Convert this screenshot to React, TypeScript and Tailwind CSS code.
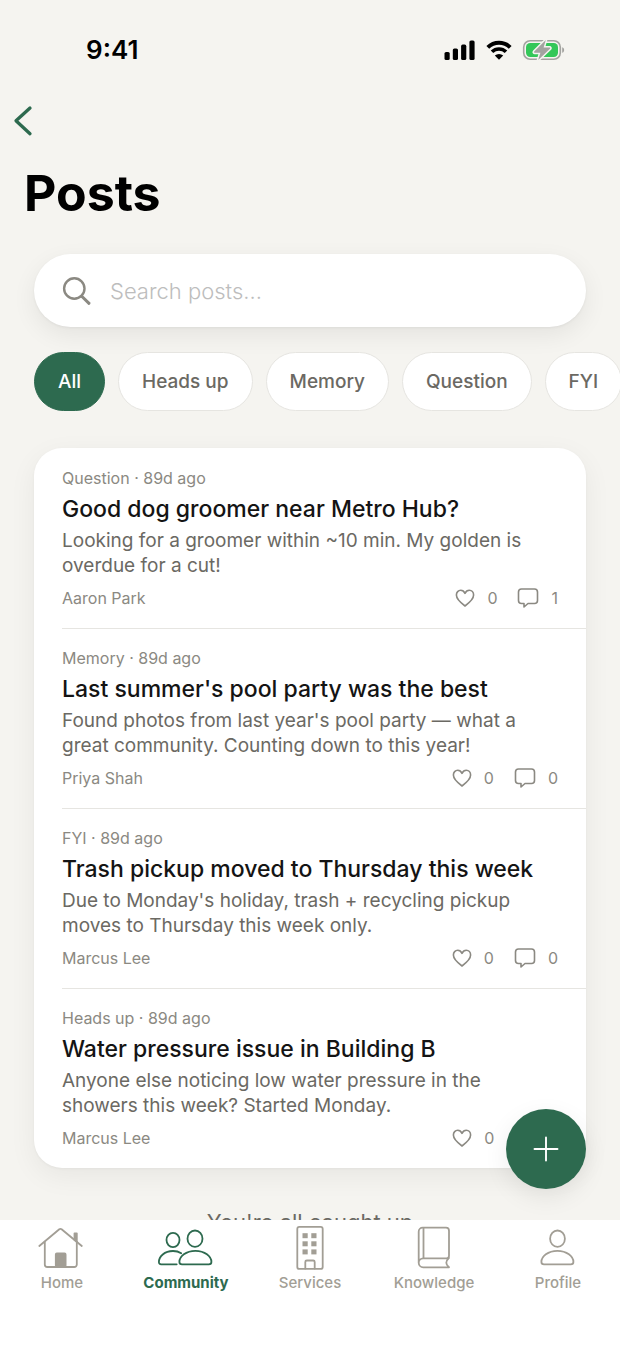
import { useState, type ReactNode } from "react";
import clsx from "clsx";

interface Post {
  id: number;
  category: string;
  age: string;
  title: string;
  body: string;
  author: string;
  likes: number;
  comments: number;
}

const categories = ["All", "Heads up", "Memory", "Question", "FYI"];

const posts: Post[] = [
  {
    id: 1,
    category: "Question",
    age: "89d ago",
    title: "Good dog groomer near Metro Hub?",
    body: "Looking for a groomer within ~10 min. My golden is overdue for a cut!",
    author: "Aaron Park",
    likes: 0,
    comments: 1,
  },
  {
    id: 2,
    category: "Memory",
    age: "89d ago",
    title: "Last summer's pool party was the best",
    body: "Found photos from last year's pool party — what a great community. Counting down to this year!",
    author: "Priya Shah",
    likes: 0,
    comments: 0,
  },
  {
    id: 3,
    category: "FYI",
    age: "89d ago",
    title: "Trash pickup moved to Thursday this week",
    body: "Due to Monday's holiday, trash + recycling pickup moves to Thursday this week only.",
    author: "Marcus Lee",
    likes: 0,
    comments: 0,
  },
  {
    id: 4,
    category: "Heads up",
    age: "89d ago",
    title: "Water pressure issue in Building B",
    body: "Anyone else noticing low water pressure in the showers this week? Started Monday.",
    author: "Marcus Lee",
    likes: 0,
    comments: 2,
  },
];

function StatusBar() {
  return (
    <div className="flex h-[100px] items-center justify-between pr-[54px] pl-[86px]">
      <span className="text-[26px] leading-8 font-semibold text-black">9:41</span>
      <div className="flex items-center gap-[9px]">
        <svg width="32" height="20" viewBox="0 0 32 20" fill="#000">
          <rect x="0.5" y="12" width="5.2" height="8" rx="1.6" />
          <rect x="8.8" y="8.4" width="5.2" height="11.6" rx="1.6" />
          <rect x="17.1" y="4.6" width="5.2" height="15.4" rx="1.6" />
          <rect x="25.4" y="0.5" width="5.2" height="19.5" rx="1.6" />
        </svg>
        <svg width="28" height="20" viewBox="0 0 28 20">
          <path d="M2.8 7.400a16 16 0 0 1 22.400 0" fill="none" stroke="#000" strokeWidth="4" />
          <path d="M7 11.800a10 10 0 0 1 14 0" fill="none" stroke="#000" strokeWidth="3.600" />
          <path d="M14 19.800l-4.200-4.200a6 6 0 0 1 8.400 0z" fill="#000" />
        </svg>
        <svg width="44" height="22" viewBox="0 0 44 22">
          <rect x="1.7" y="1.7" width="36.600" height="18.600" rx="6.500" fill="none" stroke="#a3a3a0" strokeWidth="1.600" />
          <rect x="4" y="4" width="32" height="14" rx="4.200" fill="#34c759" />
          <path d="M40.200 8.200c2.600.8 2.600 4.800 0 5.600z" fill="#a3a3a0" />
          <path
            d="M23.800 1L12.200 12.600c-.5.600-.2 1.200.5 1.200h5.700L16.200 21 28 9.700c.5-.6.2-1.300-.5-1.300h-5.900z"
            fill="#a3a3a0"
            stroke="#f5f4f0"
            strokeWidth="3"
            strokeLinejoin="round"
            paintOrder="stroke"
          />
        </svg>
      </div>
    </div>
  );
}

function HeartIcon() {
  return (
    <svg width="20" height="20" viewBox="0 0 20 20" fill="none" stroke="currentColor" strokeWidth="1.600" strokeLinejoin="round">
      <path d="M10 18C5.600 14.800 1.400 11.400 1.400 7.100 1.400 4.300 3.300 2.300 5.700 2.300c1.900 0 3.400 1.100 4.300 3 .9-1.900 2.400-3 4.300-3 2.400 0 4.300 2 4.300 4.800 0 4.300-4.200 7.700-8.600 10.900z" />
    </svg>
  );
}

function CommentIcon() {
  return (
    <svg width="22" height="22" viewBox="0 0 22 22" fill="none" stroke="currentColor" strokeWidth="1.600" strokeLinejoin="round" strokeLinecap="round">
      <path d="M4.500 2h13A3 3 0 0 1 20.500 5v8.500a3 3 0 0 1-3 3H11L7 20v-3.500H4.500a3 3 0 0 1-3-3V5a3 3 0 0 1 3-3z" />
    </svg>
  );
}

function PostRow({ post }: { post: Post }) {
  return (
    <li className="group pl-7">
      <article className="border-b border-[#e6e5e1] pt-[17px] pr-7 pb-[18px] group-last:border-b-0">
        <p className="text-base leading-6 text-[#8b8982]">
          {post.category} · {post.age}
        </p>
        <h2 className="mt-[3px] text-[23px] leading-8 font-medium text-[#141414]">{post.title}</h2>
        <p className="mt-[3px] text-[19px] leading-[25px] text-[#6b6963]">{post.body}</p>
        <div className="mt-2 flex h-6 items-center justify-between text-base leading-6 text-[#8b8982]">
          <span>{post.author}</span>
          <div className="flex items-center gap-5">
            <button type="button" aria-label="Like" className="flex items-center gap-3">
              <HeartIcon />
              {post.likes}
            </button>
            <button type="button" aria-label="Comments" className="flex items-center gap-3">
              <CommentIcon />
              {post.comments}
            </button>
          </div>
        </div>
      </article>
    </li>
  );
}

function TabIcon({ children }: { children: ReactNode }) {
  return (
    <svg
      width="56"
      height="44"
      viewBox="0 0 56 44"
      fill="none"
      stroke="currentColor"
      strokeWidth="1.800"
      strokeLinecap="round"
      strokeLinejoin="round"
    >
      {children}
    </svg>
  );
}

const tabs = [
  {
    label: "Home",
    icon: (
      <TabIcon>
        <path d="M5.300 20L25.300 3.300a1.800 1.800 0 0 1 2.300 0L47.800 20" />
        <path d="M10.800 16v22.500a2.500 2.500 0 0 0 2.500 2.500h27a2.500 2.500 0 0 0 2.500-2.500V16" />
        <path d="M40.500 7.300h2.300v8.500l-2.300-1.900z" fill="currentColor" />
        <rect x="21.800" y="27.500" width="9.800" height="13" rx="1" fill="currentColor" />
      </TabIcon>
    ),
  },
  {
    label: "Community",
    icon: (
      <TabIcon>
        <ellipse cx="15" cy="14" rx="6.500" ry="7.200" />
        <ellipse cx="37" cy="12.700" rx="7.500" ry="8.200" />
        <path d="M18.700 38.300H3.200c-1.600 0-2.300-.8-2.300-2.300C.9 30.500 6.500 25 15 25c3.200 0 5.900.8 8.200 2.300" />
        <path d="M24 38.300c-1.700 0-2.600-.8-2.600-2.300 0-5.500 6.600-11.200 16-11.200s16 5.700 16 11.200c0 1.500-.9 2.300-2.600 2.300z" />
      </TabIcon>
    ),
  },
  {
    label: "Services",
    icon: (
      <TabIcon>
        <rect x="15.300" y="0.900" width="25.400" height="42" rx="2" />
        <g fill="currentColor" stroke="none">
          <rect x="20.500" y="7.200" width="5.200" height="5" />
          <rect x="29.300" y="7.200" width="5.200" height="5" />
          <rect x="20.500" y="15.300" width="5.200" height="5" />
          <rect x="29.300" y="15.300" width="5.200" height="5" />
          <rect x="20.500" y="23.400" width="5.200" height="5" />
          <rect x="29.300" y="23.400" width="5.200" height="5" />
        </g>
        <path d="M23.300 42.500V36a1.500 1.500 0 0 1 1.500-1.500h6.400a1.500 1.500 0 0 1 1.500 1.500v6.500" />
      </TabIcon>
    ),
  },
  {
    label: "Knowledge",
    icon: (
      <TabIcon>
        <path d="M12.700 37V5.700a4 4 0 0 1 4-4H40a3 3 0 0 1 3 3v25.100a2.500 2.500 0 0 1-2.500 2.500H17.200a4.500 4.500 0 0 0 0 9H43c-3.600-3-3.600-6 0-9.500" />
        <path d="M17.500 1.900v30.300" />
      </TabIcon>
    ),
  },
  {
    label: "Profile",
    icon: (
      <TabIcon>
        <ellipse cx="27.500" cy="12.700" rx="7.400" ry="8.200" />
        <path d="M14 38.300c-1.700 0-2.600-.8-2.600-2.300 0-5.500 6.600-11.200 16-11.200s16 5.700 16 11.200c0 1.500-.9 2.300-2.600 2.300z" />
      </TabIcon>
    ),
  },
];

export default function App() {
  const [category, setCategory] = useState("All");
  const [query, setQuery] = useState("");

  return (
    <div className="flex h-screen flex-col bg-[#f5f4f0] font-['Inter',sans-serif]">
      <div className="relative min-h-0 flex-1">
        <main className="h-full overflow-x-hidden overflow-y-auto [scrollbar-width:none]">
          <StatusBar />
          <button type="button" aria-label="Back" className="ml-3 block py-[5px] text-[#2d6a4f]">
            <svg width="22" height="32" viewBox="0 0 22 32" fill="none" stroke="currentColor" strokeWidth="3.300" strokeLinecap="round" strokeLinejoin="round">
              <path d="M18 3L4 15.700l14 13" />
            </svg>
          </button>
          <h1 className="mt-5 pl-6 text-[50px] leading-[62px] font-bold text-black">Posts</h1>

          <label className="mx-[34px] mt-[30px] flex h-[73px] items-center gap-[18px] rounded-full bg-white px-7 shadow-[0_8px_24px_rgba(0,0,0,0.07),0_1px_3px_rgba(0,0,0,0.05)]">
            <svg width="30" height="30" viewBox="0 0 30 30" fill="none" stroke="#8b8982" strokeLinecap="round" className="shrink-0">
              <circle cx="12.300" cy="12.500" r="10.200" strokeWidth="2.400" />
              <path d="M20 20.500l7 6.800" strokeWidth="3" />
            </svg>
            <input
              type="text"
              aria-label="Search posts"
              placeholder="Search posts..."
              value={query}
              onChange={(e) => setQuery(e.target.value)}
              className="min-w-0 flex-1 text-[22px] leading-8 font-light text-[#141414] outline-none placeholder:text-[#bdbdbd]"
            />
          </label>

          <div className="mt-[25px] flex gap-[13px] overflow-hidden pl-[34px]">
            {categories.map((name) => (
              <button
                key={name}
                type="button"
                onClick={() => setCategory(name)}
                className={clsx(
                  "h-[59px] shrink-0 rounded-full border px-[23px] text-[19px] leading-6 font-medium",
                  name === category
                    ? "border-[#2d6a4f] bg-[#2d6a4f] text-white"
                    : "border-[#e6e5e1] bg-white text-[#6b6963]"
                )}
              >
                {name}
              </button>
            ))}
          </div>

          <ul className="mx-[34px] mt-[37px] rounded-[28px] bg-white pt-px shadow-[0_8px_28px_rgba(0,0,0,0.06),0_1px_3px_rgba(0,0,0,0.04)]">
            {posts.map((post) => (
              <PostRow key={post.id} post={post} />
            ))}
          </ul>
          <p className="mt-[38px] text-center text-[22px] leading-8 text-[#6b6963]">You're all caught up</p>
        </main>

        <button
          type="button"
          aria-label="New post"
          className="absolute right-[34px] bottom-[31px] flex size-20 items-center justify-center rounded-full bg-[#2d6a4f] text-white shadow-[0_8px_24px_rgba(0,0,0,0.08)]"
        >
          <svg width="26" height="26" viewBox="0 0 26 26" stroke="currentColor" strokeWidth="1.900" strokeLinecap="round">
            <path d="M13 1.500v23M1.500 13h23" />
          </svg>
        </button>
      </div>

      <nav className="grid h-32 grid-cols-5 bg-white">
        {tabs.map(({ label, icon }) => (
          <a
            key={label}
            href="#"
            className={clsx(
              "flex flex-col items-center pt-[6px] text-[15px] leading-5",
              label === "Community" ? "font-bold text-[#2d6a4f]" : "font-medium text-[#a29e95]"
            )}
          >
            {icon}
            <span className="mt-[3px]">{label}</span>
          </a>
        ))}
      </nav>
    </div>
  );
}
